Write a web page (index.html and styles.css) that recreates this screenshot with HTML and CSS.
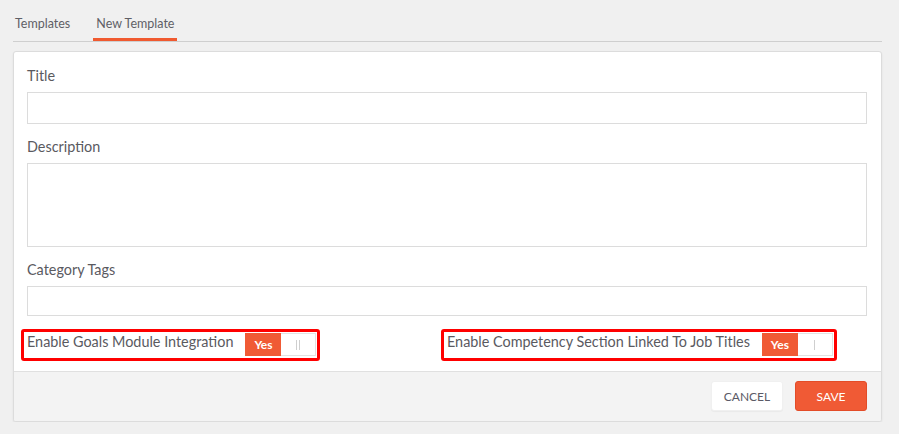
FILE: index.html
```html
<!DOCTYPE html>
<html lang="en">
<head>
<meta charset="utf-8">
<title>New Template</title>
<link rel="stylesheet" href="styles.css">
</head>
<body>
<div class="page">
  <nav class="tabs">
    <a class="tab">Templates</a>
    <a class="tab active">New Template</a>
  </nav>
  <div class="card">
    <div class="card-body">
      <div class="form-group">
        <label class="field-label">Title</label>
        <input class="input" type="text">
      </div>
      <div class="form-group">
        <label class="field-label">Description</label>
        <textarea class="input textarea"></textarea>
      </div>
      <div class="form-group">
        <label class="field-label">Category Tags</label>
        <input class="input input-tags" type="text">
      </div>
      <div class="toggle-grid">
        <div class="toggle-col">
          <div class="highlight">
            <span class="toggle-label">Enable Goals Module Integration</span>
            <span class="switch">
              <span class="switch-on">Yes</span>
              <span class="switch-handle"><span class="grip"></span><span class="grip"></span></span>
            </span>
          </div>
        </div>
        <div class="toggle-col">
          <div class="highlight">
            <span class="toggle-label">Enable Competency Section Linked To Job Titles</span>
            <span class="switch">
              <span class="switch-on">Yes</span>
              <span class="switch-handle"><span class="grip"></span></span>
            </span>
          </div>
        </div>
      </div>
    </div>
    <div class="card-footer">
      <button class="btn btn-cancel">CANCEL</button>
      <button class="btn btn-save">SAVE</button>
    </div>
  </div>
</div>
</body>
</html>
```

FILE: styles.css
```css
* { box-sizing: border-box; }
html, body {
  margin: 0;
  padding: 0;
  background: #f0f0f0;
  font-family: Lato, "Open Sans", sans-serif;
  color: #58595b;
}
.page {
  width: 869px;
  margin-left: 13px;
}
.tabs {
  display: flex;
  gap: 20px;
  padding-top: 14px;
  border-bottom: 1px solid #cfcfcf;
}
.tab {
  display: block;
  margin-left: -1px;
  padding: 0 3px 4px;
  font-size: 12.5px;
  line-height: 20px;
  color: #5f5f66;
  border-bottom: 3px solid transparent;
  cursor: pointer;
}
.tab + .tab { margin-left: 0; }
.tab.active { border-bottom-color: #f05a30; }

.card {
  margin-top: 9px;
  background: #fff;
  border: 1px solid #dcdcdc;
  border-radius: 3px;
  box-shadow: 0 1px 2px rgba(0,0,0,0.08);
  overflow: hidden;
}
.card-body {
  padding: 14px 14px 10px 13px;
}
.form-group {
  display: flex;
  flex-direction: column;
  margin-bottom: 13px;
}
.field-label {
  font-size: 14.4px;
  line-height: 20px;
  margin-bottom: 6px;
  color: #5a5a5f;
}
.input {
  display: block;
  width: 840px;
  height: 32px;
  border: 1px solid #dcdcdc;
  background: #fff;
  font-family: inherit;
  font-size: 14px;
  padding: 4px 8px;
  outline: none;
  margin: 0;
}
.textarea {
  height: 84px;
  resize: none;
}
.input-tags { height: 30px; }

.toggle-grid {
  display: grid;
  grid-template-columns: 420px 420px;
}
.toggle-col { display: flex; }
.highlight {
  display: inline-flex;
  align-items: flex-start;
  margin-left: -6px;
  border: 3px solid #ff0000;
  border-radius: 3px;
  padding: 0 1px 2px 3px;
}
.toggle-label {
  font-size: 14.4px;
  line-height: 20px;
  margin-right: 12px;
  white-space: nowrap;
  color: #5a5a5f;
}
.switch {
  display: flex;
  margin-top: 1px;
  height: 23px;
}
.switch-on {
  width: 36px;
  height: 23px;
  background: #f05a35;
  color: #fff;
  font-size: 12px;
  font-weight: 700;
  display: flex;
  align-items: center;
  justify-content: center;
}
.switch-handle {
  width: 35px;
  height: 23px;
  background: #fff;
  border: 1px solid #e2e2e2;
  border-left: none;
  display: flex;
  align-items: center;
  justify-content: center;
  gap: 2px;
}
.grip {
  display: block;
  width: 1px;
  height: 10px;
  background: #cfcfcf;
}

.card-footer {
  display: flex;
  justify-content: flex-end;
  gap: 12px;
  padding: 9px 14px 10px;
  background: #f3f3f3;
  border-top: 1px solid #e0e0e0;
}
.btn {
  width: 72px;
  height: 30px;
  border-radius: 3px;
  font-family: inherit;
  font-size: 12px;
  cursor: pointer;
  padding: 0;
}
.btn-cancel {
  background: #fff;
  border: 1px solid #f0f0f0;
  color: #5a5a66;
  box-shadow: 0 1px 1px rgba(0,0,0,0.04);
}
.btn-save {
  background: #f05a35;
  border: 1px solid #e34c28;
  color: #fff;
}
```
